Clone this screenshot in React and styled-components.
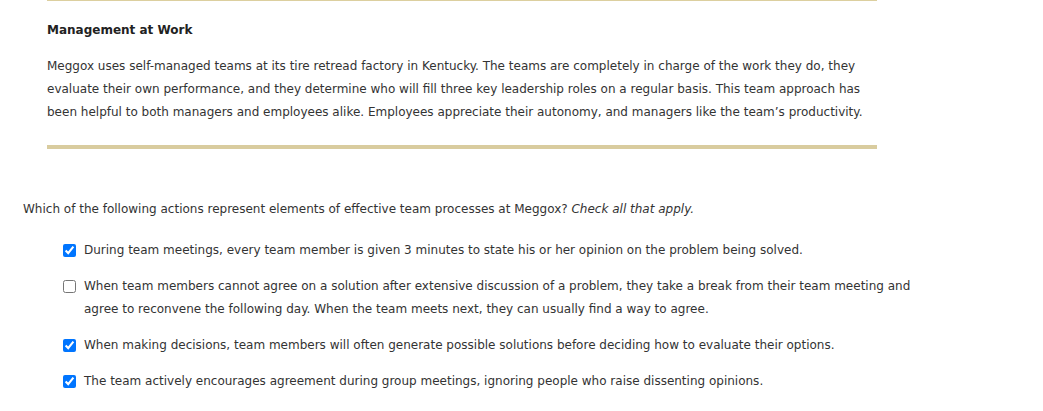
import React from "react";
import styled, { createGlobalStyle } from "styled-components";

const GlobalStyle = createGlobalStyle`
  body {
    margin: 0;
    background: #fff;
    font-family: "DejaVu Sans", Verdana, sans-serif;
    color: #333;
  }
`;

const options = [
  {
    text: "During team meetings, every team member is given 3 minutes to state his or her opinion on the problem being solved.",
    checked: true,
  },
  {
    text: "When team members cannot agree on a solution after extensive discussion of a problem, they take a break from their team meeting and agree to reconvene the following day. When the team meets next, they can usually find a way to agree.",
    checked: false,
  },
  {
    text: "When making decisions, team members will often generate possible solutions before deciding how to evaluate their options.",
    checked: true,
  },
  {
    text: "The team actively encourages agreement during group meetings, ignoring people who raise dissenting opinions.",
    checked: true,
  },
];

const App = () => {
  return (
    <>
      <GlobalStyle />
      <Page>
        <CaseBox>
          <CaseTitle>Management at Work</CaseTitle>
          <CaseText>
            Meggox uses self-managed teams at its tire retread factory in Kentucky. The teams are completely in charge of
            the work they do, they evaluate their own performance, and they determine who will fill three key leadership
            roles on a regular basis. This team approach has been helpful to both managers and employees alike. Employees
            appreciate their autonomy, and managers like the team’s productivity.
          </CaseText>
        </CaseBox>
        <Question>
          Which of the following actions represent elements of effective team processes at Meggox? <em>Check all that apply.</em>
        </Question>
        <OptionList>
          {options.map((o, i) => (
            <Option key={i}>
              <Box type="checkbox" defaultChecked={o.checked} />
              <span>{o.text}</span>
            </Option>
          ))}
        </OptionList>
      </Page>
    </>
  );
};

const Page = styled.div`
  width: 1043px;
  height: 411px;
  overflow: hidden;
`;

const CaseBox = styled.div`
  margin-left: 47px;
  width: 830px;
  border-top: 1px solid #dccf9f;
  border-bottom: 4px solid #d9cc9f;
  padding: 19px 0 21px;
  box-sizing: border-box;
`;

const CaseTitle = styled.h3`
  margin: 0 0 15px;
  font-size: 12px;
  font-weight: bold;
  color: #222;
  line-height: 20px;
`;

const CaseText = styled.p`
  margin: 0;
  padding-right: 12px;
  font-size: 12px;
  line-height: 23px;
`;

const Question = styled.div`
  margin: 50px 0 0 23px;
  font-size: 12px;
  line-height: 20px;
  em {
    font-style: italic;
  }
`;

const OptionList = styled.div`
  margin: 20px 0 0 63px;
  width: 860px;
  display: flex;
  flex-direction: column;
  gap: 13px;
`;

const Option = styled.label`
  display: flex;
  align-items: flex-start;
  font-size: 12px;
  line-height: 23px;
`;

const Box = styled.input`
  flex: none;
  width: 13px;
  height: 13px;
  margin: 5px 8px 0 0;
  accent-color: #0075ff;
`;

export default App;
